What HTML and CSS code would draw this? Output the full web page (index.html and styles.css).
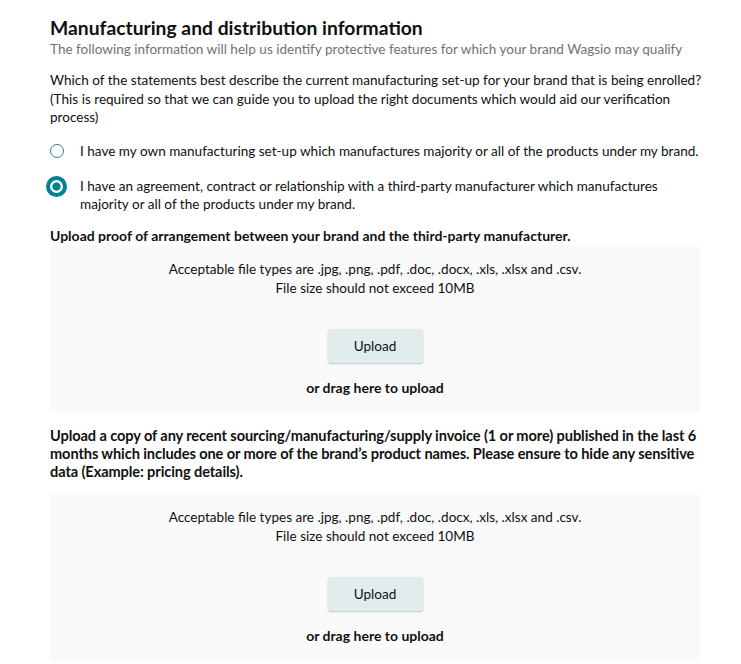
FILE: index.html
```html
<!DOCTYPE html>
<html lang="en">
<head>
<meta charset="utf-8">
<title>Manufacturing and distribution information</title>
<link rel="stylesheet" href="styles.css">
</head>
<body>
<main class="page">
  <h1 class="title">Manufacturing and distribution information</h1>
  <p class="subtitle">The following information will help us identify protective features for which your brand Wagsio may qualify</p>
  <p class="question">Which of the statements best describe the current manufacturing set-up for your brand that is being enrolled? (This is required so that we can guide you to upload the right documents which would aid our verification process)</p>

  <div class="options">
    <label class="option">
      <span class="radio-slot"><span class="radio"></span></span>
      <span class="option-text">I have my own manufacturing set-up which manufactures majority or all of the products under my brand.</span>
    </label>
    <label class="option">
      <span class="radio-slot"><span class="radio radio-checked"></span></span>
      <span class="option-text">I have an agreement, contract or relationship with a third-party manufacturer which manufactures majority or all of the products under my brand.</span>
    </label>
  </div>

  <h2 class="upload-heading">Upload proof of arrangement between your brand and the third-party manufacturer.</h2>
  <section class="dropzone">
    <p class="drop-info">Acceptable file types are .jpg, .png, .pdf, .doc, .docx, .xls, .xlsx and .csv.<br>File size should not exceed 10MB</p>
    <button class="upload-btn" type="button">Upload</button>
    <p class="drag-text">or drag here to upload</p>
  </section>

  <h2 class="upload-heading upload-heading-two">Upload a copy of any recent sourcing/manufacturing/supply invoice (1 or more) published in the last 6 months which includes one or more of the brand’s product names. Please ensure to hide any sensitive data (Example: pricing details).</h2>
  <section class="dropzone">
    <p class="drop-info">Acceptable file types are .jpg, .png, .pdf, .doc, .docx, .xls, .xlsx and .csv.<br>File size should not exceed 10MB</p>
    <button class="upload-btn" type="button">Upload</button>
    <p class="drag-text">or drag here to upload</p>
  </section>
</main>
</body>
</html>
```

FILE: styles.css
```css
* { box-sizing: border-box; }

html, body {
  margin: 0;
  padding: 0;
  background: #ffffff;
}

body {
  font-family: "Lato", "Open Sans", sans-serif;
  font-size: 13.55px;
  color: #0f1111;
  overflow: hidden;
}

.page {
  width: 650px;
  margin-left: 50px;
  padding-top: 16px;
}

.title {
  margin: 0;
  font-size: 19.3px;
  line-height: 24px;
  font-weight: 700;
  color: #0f1111;
}

.subtitle {
  margin: 0;
  line-height: 19px;
  color: #6f7373;
  white-space: nowrap;
}

.question {
  margin: 12px -8px 0 0;
  line-height: 18.5px;
}

.options {
  margin-top: 15px;
  display: flex;
  flex-direction: column;
  gap: 16px;
}

.option {
  display: flex;
  align-items: flex-start;
  line-height: 18.5px;
  margin-right: -2px;
}

.radio-slot {
  flex: none;
  width: 30px;
  height: 19px;
  display: flex;
  align-items: center;
}

.radio {
  display: block;
  width: 14px;
  height: 14px;
  border-radius: 50%;
  border: 1.5px solid #2b7f8c;
  background: #fff;
}

.radio-checked {
  width: 21px;
  height: 21px;
  margin-left: -4px;
  border: 4px solid #008296;
  background: radial-gradient(circle, #008296 0 3.8px, #ffffff 4.4px);
}

.option-text {
  flex: 1;
}

.upload-heading {
  margin: 12px 0 0;
  font-size: 14px;
  line-height: 19px;
  font-weight: 700;
}

.upload-heading-two {
  margin: 15px -20px 12px 0;
  font-size: 14.6px;
  letter-spacing: -0.1px;
  line-height: 18px;
}

.dropzone {
  background: #fafafa;
  padding: 15px 0 15.5px;
  display: flex;
  flex-direction: column;
  align-items: center;
  text-align: center;
}

.drop-info {
  margin: 0;
  line-height: 19px;
}

.upload-btn {
  margin-top: 31px;
  width: 95px;
  height: 34px;
  border: 0;
  border-radius: 3px;
  background: #e3eced;
  box-shadow: 0 1px 2px rgba(0, 0, 0, 0.22);
  font-family: inherit;
  font-size: 13.55px;
  color: #0f1111;
  cursor: pointer;
}

.drag-text {
  margin: 15px 0 0;
  line-height: 19px;
  font-size: 14px;
  font-weight: 700;
}
```
